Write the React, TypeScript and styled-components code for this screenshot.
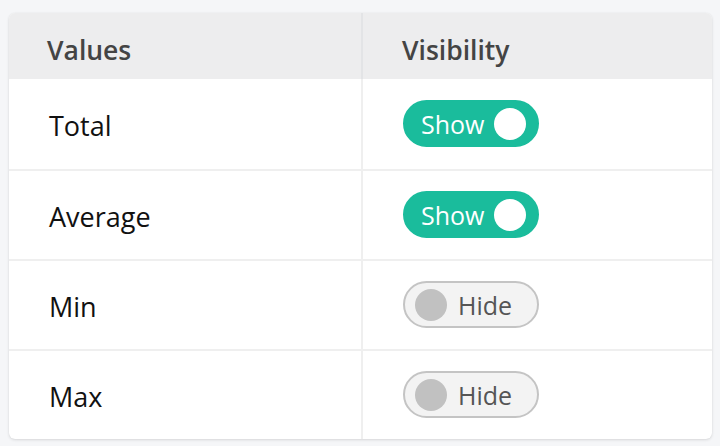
import React, { useState } from "react";
import styled, { createGlobalStyle } from "styled-components";

const Global = createGlobalStyle`
  html, body { margin: 0; padding: 0; background: #f5f6f8; }
  body { font-family: "Open Sans", "Noto Sans", sans-serif; }
  * { box-sizing: border-box; }
`;

const Page = styled.div`
  padding: 13px 8px 7px 9px;
`;

const Card = styled.div`
  display: grid;
  grid-template-columns: 354px 1fr;
  background: #ffffff;
  border-radius: 6px;
  overflow: hidden;
  box-shadow: 0 1px 3px rgba(0, 0, 0, 0.12), 0 0 1px rgba(0, 0, 0, 0.08);
`;

const HeadCell = styled.div<{ $first?: boolean }>`
  height: 66px;
  display: flex;
  align-items: center;
  padding-top: 8px;
  padding-left: ${(p) => (p.$first ? "38px" : "39px")};
  background: #ededee;
  color: #444444;
  font-size: 26.5px;
  font-weight: 600;
  border-right: ${(p) => (p.$first ? "2px solid #e3e4e6" : "none")};
`;

const Cell = styled.div<{ $first?: boolean; $top?: boolean }>`
  height: 90px;
  display: flex;
  align-items: center;
  padding-left: 40px;
  padding-top: 2px;
  color: #111111;
  font-size: 27px;
  border-top: ${(p) => (p.$top ? "none" : "2px solid #efefef")};
  border-right: ${(p) => (p.$first ? "2px solid #efefef" : "none")};
`;

const Toggle = styled.button<{ $on: boolean }>`
  width: 136px;
  height: 47px;
  display: flex;
  align-items: center;
  gap: ${(p) => (p.$on ? "10px" : "11px")};
  padding: ${(p) => (p.$on ? "0 8px 0 16px" : "0 0 0 10px")};
  border-radius: 24px;
  border: 2px solid ${(p) => (p.$on ? "#1abc9c" : "#c4c4c4")};
  background: ${(p) => (p.$on ? "#1abc9c" : "#f3f3f3")};
  color: ${(p) => (p.$on ? "#ffffff" : "#555555")};
  font-family: "Open Sans", "Noto Sans", sans-serif;
  font-size: 25px;
  cursor: pointer;
  margin-top: -3px;
`;

const Knob = styled.span<{ $on: boolean }>`
  width: 32px;
  height: 32px;
  border-radius: 50%;
  flex: none;
  background: ${(p) => (p.$on ? "#ffffff" : "#c1c1c1")};
`;

const Label = styled.span`
  line-height: 1;
  padding-top: 2px;
`;

const rows = [
  { name: "Total", on: true },
  { name: "Average", on: true },
  { name: "Min", on: false },
  { name: "Max", on: false },
];

export default function App() {
  const [state, setState] = useState(rows.map((r) => r.on));
  return (
    <Page>
      <Global />
      <Card>
        <HeadCell $first>Values</HeadCell>
        <HeadCell>Visibility</HeadCell>
        {rows.map((r, i) => (
          <React.Fragment key={r.name}>
            <Cell $first $top={i === 0}>
              {r.name}
            </Cell>
            <Cell $top={i === 0}>
              <Toggle
                $on={state[i]}
                onClick={() =>
                  setState((s) => s.map((v, j) => (j === i ? !v : v)))
                }
              >
                {state[i] ? (
                  <>
                    <Label>Show</Label>
                    <Knob $on />
                  </>
                ) : (
                  <>
                    <Knob $on={false} />
                    <Label>Hide</Label>
                  </>
                )}
              </Toggle>
            </Cell>
          </React.Fragment>
        ))}
      </Card>
    </Page>
  );
}
